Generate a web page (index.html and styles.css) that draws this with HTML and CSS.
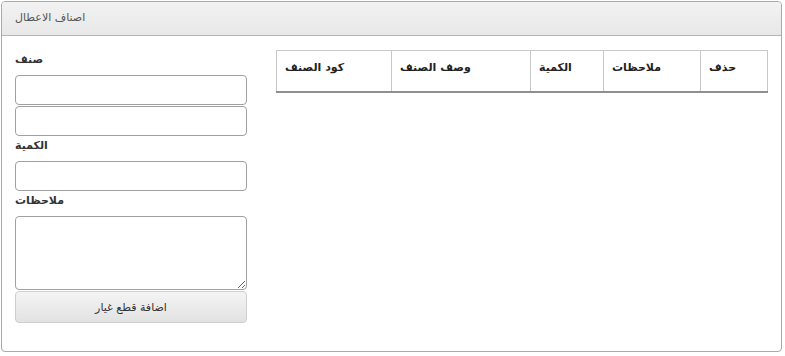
FILE: index.html
```html
<!DOCTYPE html>
<html lang="ar">
<head>
    <meta charset="UTF-8">
    <title>اصناف الاعطال</title>
    <link rel="stylesheet" href="styles.css">
</head>
<body>
    <div class="panel">
        <div class="panel-heading">اصناف الاعطال</div>
        <div class="panel-body">
            <div class="item-form">
                <label class="field-label">صنف</label>
                <input type="text" class="field">
                <input type="text" class="field field-second">
                <label class="field-label">الكمية</label>
                <input type="text" class="field">
                <label class="field-label">ملاحظات</label>
                <textarea class="field field-notes"></textarea>
                <button class="btn-add">اضافة قطع غيار</button>
            </div>
            <table class="items-table">
                <thead>
                    <tr>
                        <th class="col-code">كود الصنف</th>
                        <th class="col-desc">وصف الصنف</th>
                        <th class="col-qty">الكمية</th>
                        <th class="col-notes">ملاحظات</th>
                        <th class="col-del">حذف</th>
                    </tr>
                </thead>
                <tbody></tbody>
            </table>
        </div>
    </div>
</body>
</html>
```

FILE: styles.css
```css
body {
    margin: 0;
    padding: 1px 0 0 1px;
    font-family: 'DejaVu Sans', sans-serif;
    font-size: 11px;
    color: #333;
    background: #fff;
}

.panel {
    width: 779px;
    height: 349px;
    border: 1px solid #a9a9a9;
    border-radius: 4px;
    overflow: hidden;
}

.panel-heading {
    height: 33px;
    line-height: 32px;
    padding: 0 13px;
    background: linear-gradient(#f2f2f2, #e8e8e8);
    border-bottom: 1px solid #b5b5b5;
    color: #555;
    font-size: 11px;
}

.panel-body {
    display: flex;
    align-items: flex-start;
    gap: 29px;
    padding: 14px 13px 0 13px;
}

.item-form {
    width: 232px;
    display: flex;
    flex-direction: column;
}

.field-label {
    display: block;
    height: 16px;
    line-height: 16px;
    margin: 2px 0 7px;
    font-weight: bold;
    color: #333;
}

.field {
    display: block;
    box-sizing: border-box;
    width: 232px;
    height: 30px;
    margin: 0;
    padding: 4px 8px;
    border: 1px solid #a0a0a0;
    border-radius: 4px;
    font-family: inherit;
    font-size: 11px;
    background: #fff;
}

.field-second {
    margin-top: 1px;
}

.field-notes {
    height: 74px;
    resize: both;
}

.btn-add {
    display: block;
    width: 232px;
    height: 32px;
    margin-top: 1px;
    border: 1px solid #cfcfcf;
    border-radius: 4px;
    background: linear-gradient(#f4f4f4, #e2e2e2);
    font-family: inherit;
    font-size: 11px;
    color: #333;
}

.items-table {
    width: 491px;
    margin: 0;
    border-collapse: collapse;
    table-layout: fixed;
}

.items-table th {
    box-sizing: border-box;
    height: 41px;
    padding: 10px 8px 8px;
    border: 1px solid #c8c8c8;
    border-bottom: 2px solid #8f8f8f;
    text-align: left;
    vertical-align: top;
    font-weight: bold;
    color: #222;
}

.col-code { width: 115px; }
.col-desc { width: 139px; }
.col-qty { width: 73px; }
.col-notes { width: 97px; }
.col-del { width: 67px; }
```
